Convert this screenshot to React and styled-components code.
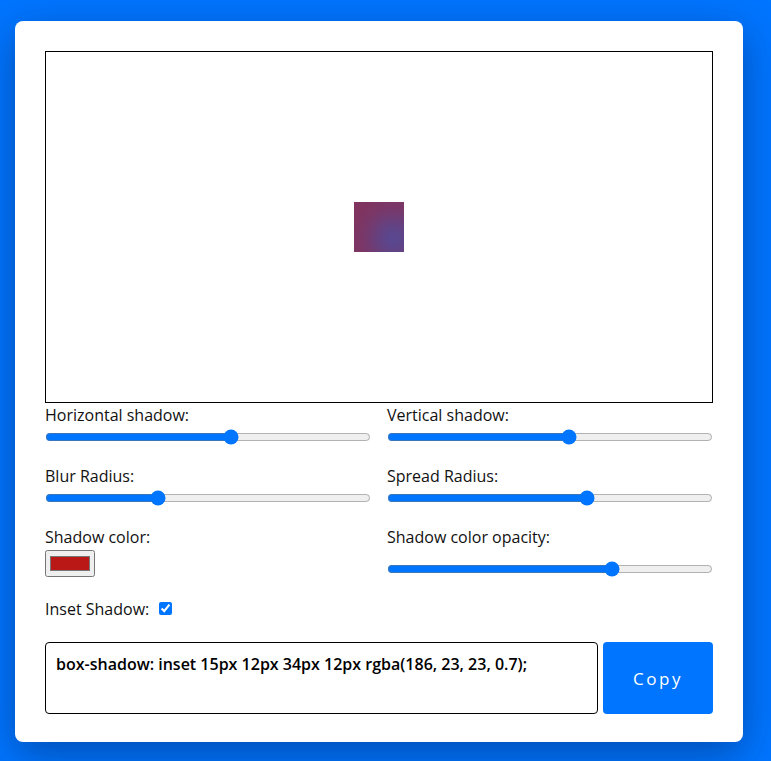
import React, { useState } from 'react'
import styled, { createGlobalStyle } from 'styled-components'

const GlobalStyle = createGlobalStyle`
    * {
        box-sizing: border-box;
    }
    body {
        margin: 0;
        background: #0075ff;
        font-family: 'Open Sans', 'Liberation Sans', sans-serif;
        color: #111;
    }
`

const Page = styled.div`
    min-height: 761px;
    padding: 21px 28px 0 15px;
`

const Card = styled.div`
    width: 728px;
    background: #fff;
    border-radius: 8px;
    padding: 30px 30px 28px;
    box-shadow: 0 12px 40px rgba(0, 20, 60, 0.4);
`

const Preview = styled.div`
    height: 352px;
    border: 1px solid #000;
    display: flex;
    align-items: center;
    justify-content: center;
`

const Box = styled.div`
    width: 50px;
    height: 50px;
    background: #0075ff;
`

const Controls = styled.div`
    display: grid;
    grid-template-columns: 1fr 1fr;
    column-gap: 16px;
    row-gap: 18.5px;
    padding-top: 1px;
`

const Field = styled.div`
    display: flex;
    flex-direction: column;
    justify-content: space-between;
`

const Label = styled.label`
    font-size: 16px;
    line-height: 22.5px;
    display: ${p => (p.inline ? 'flex' : 'block')};
    align-items: center;
`

const Range = styled.input.attrs({ type: 'range' })`
    display: block;
    width: 100%;
    margin: 2px 0;
    height: 16px;
    accent-color: #0075ff;
`

const ColorInput = styled.input.attrs({ type: 'color' })`
    display: block;
    width: 50px;
    height: 27px;
    margin: 1.5px 0 2px;
`

const Check = styled.input.attrs({ type: 'checkbox' })`
    width: 13px;
    height: 13px;
    margin: 0 0 0 10px;
    accent-color: #0075ff;
`

const Output = styled.div`
    display: flex;
    gap: 5px;
    margin-top: 22px;
    height: 72px;
`

const Code = styled.textarea`
    flex: 1;
    resize: none;
    border: 1px solid #000;
    border-radius: 4px;
    padding: 10px;
    font-family: inherit;
    font-size: 16px;
    font-weight: 600;
    line-height: 22px;
    color: #000;
    outline: none;
`

const CopyButton = styled.button`
    width: 110px;
    border: none;
    border-radius: 4px;
    background: #0075ff;
    color: #fff;
    font-family: inherit;
    font-size: 17px;
    letter-spacing: 2.5px;
    cursor: pointer;
`

const sliders = [
    { label: 'Horizontal shadow:', min: -100, max: 100, value: 15 },
    { label: 'Vertical shadow:', min: -100, max: 100, value: 12 },
    { label: 'Blur Radius:', min: 0, max: 100, value: 34 },
    { label: 'Spread Radius:', min: -50, max: 50, value: 12 },
]

const App = () => {
    const [vals, setVals] = useState(sliders.map(s => s.value))
    const [color, setColor] = useState('#ba1717')
    const [opacity, setOpacity] = useState(0.7)
    const [inset, setInset] = useState(true)

    const r = parseInt(color.slice(1, 3), 16)
    const g = parseInt(color.slice(3, 5), 16)
    const b = parseInt(color.slice(5, 7), 16)
    const shadow = `${inset ? 'inset ' : ''}${vals[0]}px ${vals[1]}px ${vals[2]}px ${vals[3]}px rgba(${r}, ${g}, ${b}, ${opacity})`

    return (
        <Page>
            <GlobalStyle />
            <Card>
                <Preview>
                    <Box style={{ boxShadow: shadow }} />
                </Preview>
                <Controls>
                    {sliders.map((s, i) => (
                        <Field key={s.label}>
                            <Label>{s.label}</Label>
                            <Range
                                min={s.min}
                                max={s.max}
                                value={vals[i]}
                                onChange={e => {
                                    const next = [...vals]
                                    next[i] = Number(e.target.value)
                                    setVals(next)
                                }}
                            />
                        </Field>
                    ))}
                    <Field>
                        <Label>Shadow color:</Label>
                        <ColorInput value={color} onChange={e => setColor(e.target.value)} />
                    </Field>
                    <Field>
                        <Label>Shadow color opacity:</Label>
                        <Range
                            min={0}
                            max={1}
                            step={0.1}
                            value={opacity}
                            onChange={e => setOpacity(Number(e.target.value))}
                        />
                    </Field>
                    <Field>
                        <Label inline>
                            Inset Shadow:
                            <Check checked={inset} onChange={e => setInset(e.target.checked)} />
                        </Label>
                    </Field>
                </Controls>
                <Output>
                    <Code readOnly value={`box-shadow: ${shadow};`} />
                    <CopyButton>Copy</CopyButton>
                </Output>
            </Card>
        </Page>
    )
}

export default App
